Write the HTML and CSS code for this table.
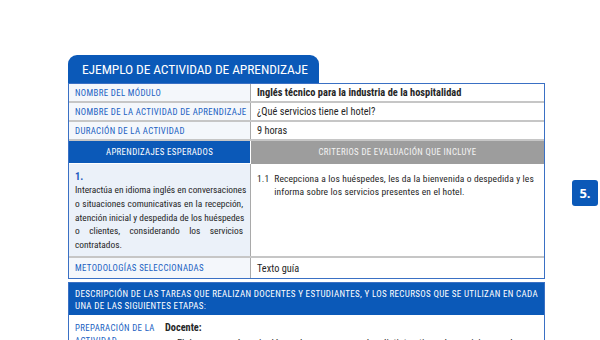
FILE: index.html
```html
<!DOCTYPE html>
<html lang="es">
<head>
<meta charset="utf-8">
<link rel="stylesheet" href="styles.css">
</head>
<body>
<div class="page">
  <div class="sheet">
    <div class="tab">EJEMPLO DE ACTIVIDAD DE APRENDIZAJE</div>
    <div class="table">
      <div class="row">
        <div class="lab">NOMBRE DEL MÓDULO</div>
        <div class="val bold">Inglés técnico para la industria de la hospitalidad</div>
      </div>
      <div class="row">
        <div class="lab">NOMBRE DE LA ACTIVIDAD DE APRENDIZAJE</div>
        <div class="val">¿Qué servicios tiene el hotel?</div>
      </div>
      <div class="row">
        <div class="lab">DURACIÓN DE LA ACTIVIDAD</div>
        <div class="val">9 horas</div>
      </div>
      <div class="row head">
        <div class="h-blue">APRENDIZAJES ESPERADOS</div>
        <div class="h-gray">CRITERIOS DE EVALUACIÓN QUE INCLUYE</div>
      </div>
      <div class="row content">
        <div class="ae">
          <div class="num">1.</div>
          <p>
            <span class="jl">Interactúa en idioma inglés en conversaciones</span>
            <span class="jl">o situaciones comunicativas en la recepción,</span>
            <span class="jl">atención inicial y despedida de los huéspedes</span>
            <span class="jl">o clientes, considerando los servicios</span>
            <span class="ll">contratados.</span>
          </p>
        </div>
        <div class="crit">
          <span class="cn">1.1</span>
          <span class="ct">Recepciona a los huéspedes, les da la bienvenida o despedida y les informa sobre los servicios presentes en el hotel.</span>
        </div>
      </div>
      <div class="row">
        <div class="lab tall">METODOLOGÍAS SELECCIONADAS</div>
        <div class="val tall">Texto guía</div>
      </div>
    </div>
    <div class="table lower">
      <div class="desc">DESCRIPCIÓN DE LAS TAREAS QUE REALIZAN DOCENTES Y ESTUDIANTES, Y LOS RECURSOS QUE SE UTILIZAN EN CADA UNA DE LAS SIGUIENTES ETAPAS:</div>
      <div class="stage">
        <div class="lab2">PREPARACIÓN DE LA ACTIVIDAD</div>
        <div class="body2">
          <div class="bold">Docente:</div>
          <ul>
            <li>Elabora una guía en inglés, en la que aparecen los distintos tipos de servicios con los que cuenta un hotel.</li>
          </ul>
        </div>
      </div>
    </div>
  </div>
  <div class="badge">5.</div>
</div>
</body>
</html>
```
FILE: styles.css
```css
html, body { margin: 0; padding: 0; background: #fff; }
body {
  font-family: "Roboto Condensed", "DejaVu Sans Condensed", sans-serif;
  color: #262626;
}
.page { position: relative; width: 600px; height: 340px; overflow: hidden; }
.sheet { padding: 55px 0 0 68px; width: 477px; }
.tab {
  display: inline-block;
  background: #0b59b8;
  color: #fff;
  font-size: 13.5px;
  letter-spacing: -0.1px;
  padding: 0 11px 0 14px;
  height: 28px;
  line-height: 29px;
  border-radius: 9px 9px 0 0;
}
.table {
  border: 1px solid #3a70c4;
  background: #fff;
}
.row {
  display: grid;
  grid-template-columns: 182px 1fr;
  border-bottom: 2px solid #c6c6c6;
}
.row:last-child { border-bottom: 0; }
.lab {
  background: #f4f7fb;
  color: #2061c2;
  font-size: 8.8px;
  letter-spacing: 0.36px;
  padding: 0 6px;
  height: 17px;
  line-height: 18px;
  border-right: 1px solid #a9a9a9;
  white-space: nowrap;
}
.val {
  font-size: 10.3px;
  padding: 0 6px;
  height: 17px;
  line-height: 18px;
}
.val.bold { font-size: 10.4px; }
.tall { height: 20px; line-height: 21px; }
.bold { font-weight: bold; }
.head { border-bottom: 0; }
.h-blue {
  background: #0b59b8;
  color: #fff;
  font-size: 8.8px;
  letter-spacing: 0.35px;
  text-align: center;
  height: 22px;
  line-height: 23px;
  border-right: 1px solid #fff;
}
.h-gray {
  background: #9d9d9d;
  color: #f4f4f4;
  font-size: 8.8px;
  letter-spacing: 0.35px;
  text-align: center;
  line-height: 23px;
}
.content { height: 92px; }
.ae {
  background: #ebf1f9;
  padding: 6px 7px 0 6px;
  border-right: 1px solid #a9a9a9;
  font-size: 9.4px;
}
.num { color: #1d5cbf; font-weight: bold; font-size: 10.5px; line-height: 13px; }
.ae p { margin: 0; line-height: 13.8px; }
.jl { display: block; text-align: justify; text-align-last: justify; white-space: nowrap; }
.ll { display: block; }
.crit {
  display: flex;
  gap: 5px;
  padding: 8px 3px 0 6px;
  font-size: 9.5px;
  letter-spacing: 0.12px;
  line-height: 13px;
}
.cn { flex: none; }
.lower { margin-top: 3px; border-bottom: 0; }
.desc {
  background: #0b59b8;
  color: #fff;
  font-size: 9px;
  letter-spacing: 0.33px;
  padding: 5px 6px 3px 6px;
  line-height: 12px;
}
.stage {
  display: grid;
  grid-template-columns: 96px 1fr;
  padding-top: 7px;
}
.lab2 {
  color: #2061c2;
  font-size: 8.8px;
  letter-spacing: 0.36px;
  line-height: 12.5px;
  padding-left: 6px;
}
.body2 { font-size: 10.3px; line-height: 12.5px; }
.body2 ul { margin: 3px 0 0 0; padding-left: 12px; }
.badge {
  position: absolute;
  left: 572px;
  top: 180px;
  width: 26px;
  height: 26px;
  background: #0b59b8;
  border-radius: 3px;
  color: #fff;
  font-family: "Open Sans", sans-serif;
  font-weight: bold;
  font-size: 13px;
  line-height: 26px;
  text-align: center;
}
```
